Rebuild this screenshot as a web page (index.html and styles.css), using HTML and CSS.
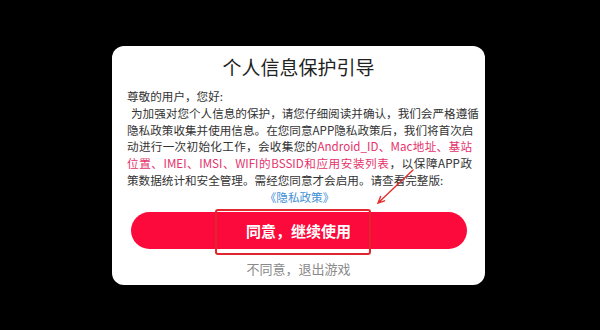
FILE: index.html
```html
<!DOCTYPE html>
<html lang="zh-CN">
<head>
    <meta charset="UTF-8">
    <meta name="viewport" content="width=device-width, initial-scale=1.0">
    <title>个人信息保护引导</title>
    <link rel="stylesheet" href="styles.css">
</head>
<body>
    <div class="dialog">
        <h1 class="title">个人信息保护引导</h1>

        <div class="content">
            <div class="line">尊敬的用户，您好:</div>
            <div class="line full indent">为加强对您个人信息的保护，请您仔细阅读并确认，我们会严格遵循</div>
            <div class="line full">隐私政策收集并使用信息。在您同意APP隐私政策后，我们将首次启</div>
            <div class="line full">动进行一次初始化工作，会收集您的<span class="hl">Android_ID、Mac地址、基站</span></div>
            <div class="line full"><span class="hl">位置、IMEI、IMSI、WIFI的BSSID和应用安装列表</span>，以保障APP政</div>
            <div class="line">策数据统计和安全管理。需经您同意才会启用。请查看完整版:</div>
            <div class="line center"><a class="link" href="#">《隐私政策》</a></div>
        </div>

        <button class="agree">同意，继续使用</button>
        <div class="refuse">不同意，退出游戏</div>

        <!-- annotation drawn over the screenshot -->
        <div class="mark"></div>
        <svg class="arrow" width="373" height="239" viewBox="0 0 373 239">
            <path d="M301 124 L266 157 M272.6 154.8 L266 157 L268.6 150.5" fill="none" stroke="#e3302f" stroke-width="1.4" stroke-linecap="round"/>
        </svg>
    </div>
</body>
</html>
```

FILE: styles.css
```css
* { box-sizing: border-box; margin: 0; padding: 0; }
body { background: #000; font-family: "Noto Sans CJK SC", "Noto Sans", sans-serif; }

.dialog {
    position: relative;
    width: 373px;
    height: 239px;
    margin: 46px 0 0 112px;
    padding-top: 10px;
    background: #fff;
    border-radius: 12px;
}

.title {
    font-size: 19px;
    font-weight: normal;
    line-height: 22px;
    text-align: center;
    color: #222;
}

.content {
    margin: 10px 13px 0 15px;
    font-size: 11.6px;
    line-height: 16.8px;
    color: #333;
}

.line { white-space: nowrap; }
.full { text-align: justify; text-align-last: justify; }
.indent { padding-left: 4px; }
.center { text-align: center; }

.hl { color: #e5336c; }
.link { color: #3f8fd6; text-decoration: none; }

.agree {
    display: block;
    width: 336px;
    height: 37px;
    margin: 6px auto 0;
    border: none;
    border-radius: 19px;
    background: #fb0a3b;
    color: #fff;
    font-family: inherit;
    font-size: 15px;
    font-weight: bold;
}

.refuse {
    margin-top: 10px;
    font-size: 13px;
    line-height: 20px;
    text-align: center;
    color: #8a8a8a;
}

.mark {
    position: absolute;
    left: 103px;
    top: 163px;
    width: 156px;
    height: 46px;
    border: 2px solid #e2262d;
    border-radius: 3px;
}

.arrow {
    position: absolute;
    left: 0;
    top: 0;
}
```
